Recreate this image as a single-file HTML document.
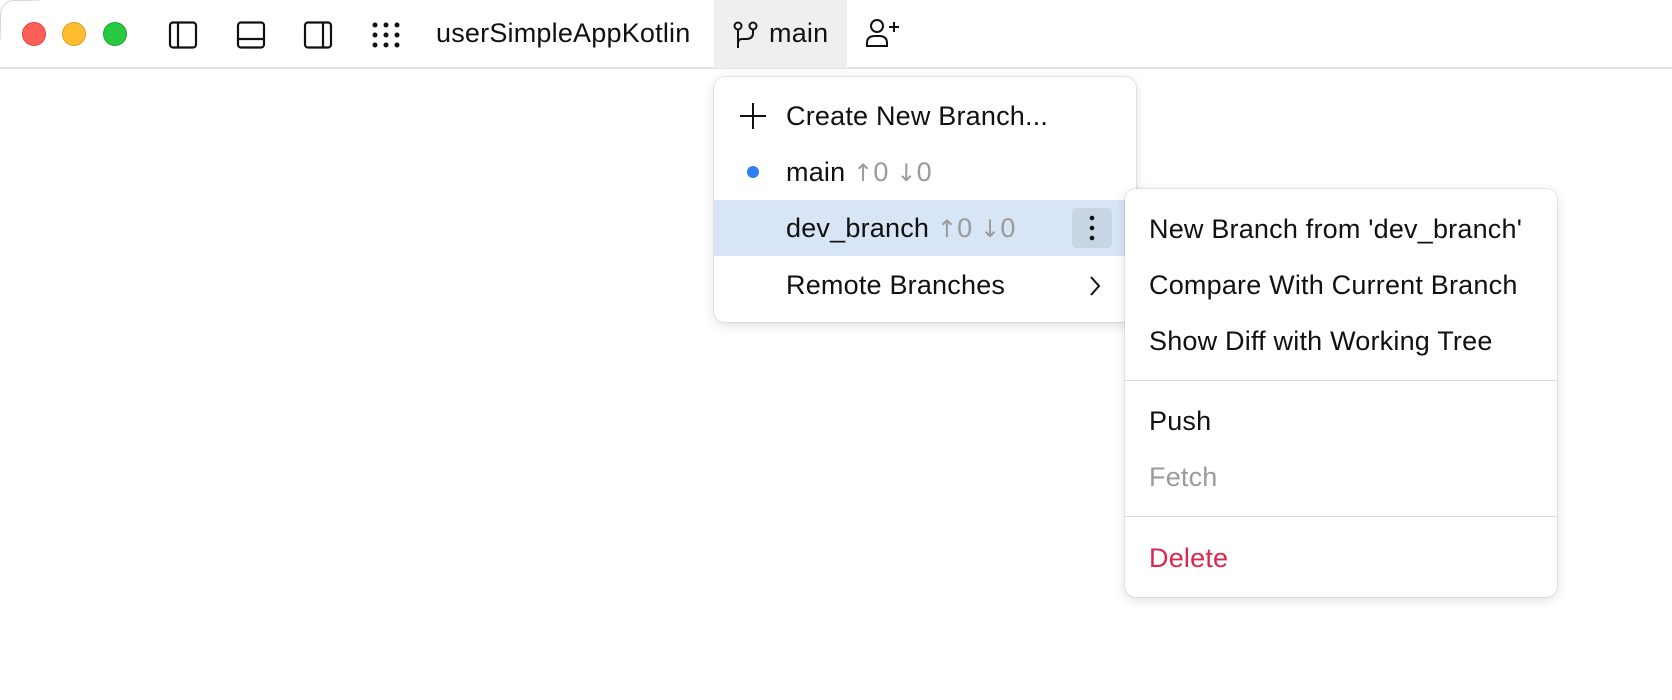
<!DOCTYPE html>
<html><head><meta charset="utf-8">
<style>
*{margin:0;padding:0;box-sizing:border-box}
html,body{width:1672px;height:700px;overflow:hidden;background:#fff;font-family:"Liberation Sans",Arial,sans-serif;color:#111}
.corner{position:absolute;left:0;top:0;width:40px;height:40px;border-left:1px solid #d4d4d4;border-top:1px solid #d4d4d4;border-top-left-radius:14px;-webkit-mask:linear-gradient(135deg,#000 30%,transparent 70%);mask:linear-gradient(135deg,#000 30%,transparent 70%)}
.bar{position:absolute;left:0;top:0;width:1672px;height:69px;border-bottom:2px solid #e4e4e4}
.light{position:absolute;top:22px;width:24px;height:24px;border-radius:50%}
.abs{position:absolute}
.t{position:absolute;font-size:27px;white-space:nowrap;letter-spacing:0.2px}
.menu{position:absolute;background:#fff;border-radius:11px;box-shadow:0 3px 12px rgba(0,0,0,.13),0 0 0 1px rgba(0,0,0,.07)}
.g{color:#9b9b9b}
.ar{font-family:"DejaVu Sans",sans-serif;font-size:24px}
.sep{position:absolute;left:0;right:0;height:1px;background:#dadada}
</style></head><body>
<div class="corner"></div>
<div class="bar"></div>
<div class="light" style="left:22px;background:#fe5f57;border:1px solid #e2463f"></div>
<div class="light" style="left:62px;background:#febc2e;border:1px solid #dea123"></div>
<div class="light" style="left:103px;background:#28c840;border:1px solid #1aab29"></div>

<svg class="abs" style="left:168px;top:21px" width="30" height="28" viewBox="0 0 30 28" fill="none" stroke="#111" stroke-width="2.2"><rect x="2" y="1.5" width="26" height="25" rx="3"/><line x1="10" y1="2" x2="10" y2="26"/></svg>
<svg class="abs" style="left:236px;top:21px" width="30" height="28" viewBox="0 0 30 28" fill="none" stroke="#111" stroke-width="2.2"><rect x="2" y="1.5" width="26" height="25" rx="3"/><line x1="2" y1="18" x2="28" y2="18"/></svg>
<svg class="abs" style="left:303px;top:21px" width="30" height="28" viewBox="0 0 30 28" fill="none" stroke="#111" stroke-width="2.2"><rect x="2" y="1.5" width="26" height="25" rx="3"/><line x1="20" y1="2" x2="20" y2="26"/></svg>
<svg class="abs" style="left:372px;top:22px" width="28" height="26" viewBox="0 0 28 26" fill="#111"><circle cx="3" cy="3" r="2.5"/><circle cx="14" cy="3" r="2.5"/><circle cx="25" cy="3" r="2.5"/><circle cx="3" cy="13" r="2.5"/><circle cx="14" cy="13" r="2.5"/><circle cx="25" cy="13" r="2.5"/><circle cx="3" cy="23" r="2.5"/><circle cx="14" cy="23" r="2.5"/><circle cx="25" cy="23" r="2.5"/></svg>
<div class="t" style="left:436px;top:18px">userSimpleAppKotlin</div>

<div class="abs" style="left:714px;top:0;width:133px;height:68px;background:#efefef"></div>
<svg class="abs" style="left:733px;top:21px" width="26" height="28" viewBox="0 0 26 28" fill="none" stroke="#111" stroke-width="2"><circle cx="5" cy="5" r="3.5"/><circle cx="20" cy="5" r="3.5"/><line x1="5" y1="8.5" x2="5" y2="27"/><path d="M20 8.5 V12 Q20 18 13 18 H9 Q5 18 5 22"/></svg>
<div class="t" style="left:769px;top:18px">main</div>
<svg class="abs" style="left:865px;top:18px" width="36" height="30" viewBox="0 0 36 30" fill="none" stroke="#111" stroke-width="2"><circle cx="12" cy="8" r="6"/><path d="M2 28 V25 Q2 18 10 18 H14 Q22 18 22 25 V28 Z"/><line x1="24" y1="9" x2="34" y2="9"/><line x1="29" y1="4" x2="29" y2="14"/></svg>

<div class="menu" style="left:714px;top:77px;width:422px;height:245px"></div>
<div class="abs" style="left:714px;top:200px;width:412px;height:56px;background:#d7e5f7"></div>
<div class="abs" style="left:1072px;top:208px;width:40px;height:40px;border-radius:4px;background:#c7d5e4"></div>
<svg class="abs" style="left:1088px;top:214px" width="8" height="28" viewBox="0 0 8 28" fill="#111"><circle cx="4" cy="4" r="2.3"/><circle cx="4" cy="14" r="2.3"/><circle cx="4" cy="24" r="2.3"/></svg>
<svg class="abs" style="left:740px;top:103px" width="26" height="26" viewBox="0 0 26 26" stroke="#111" stroke-width="2"><line x1="0" y1="13" x2="26" y2="13"/><line x1="13" y1="0" x2="13" y2="26"/></svg>
<div class="t" style="left:786px;top:101px">Create New Branch...</div>
<div class="abs" style="left:747px;top:166px;width:12px;height:12px;border-radius:50%;background:#2f7ef0"></div>
<div class="t" style="left:786px;top:157px">main <span class="g"><span class="ar">↑</span>0 <span class="ar">↓</span>0</span></div>
<div class="t" style="left:786px;top:213px">dev_branch <span class="g"><span class="ar">↑</span>0 <span class="ar">↓</span>0</span></div>
<div class="t" style="left:786px;top:270px">Remote Branches</div>
<svg class="abs" style="left:1088px;top:275px" width="14" height="22" viewBox="0 0 14 22" fill="none" stroke="#111" stroke-width="2"><path d="M3 2 L11 11 L3 20"/></svg>

<div class="menu" style="left:1125px;top:189px;width:432px;height:408px">
<div class="sep" style="top:191px"></div>
<div class="sep" style="top:327px"></div>
</div>
<div class="t" style="left:1149px;top:214px">New Branch from 'dev_branch'</div>
<div class="t" style="left:1149px;top:270px">Compare With Current Branch</div>
<div class="t" style="left:1149px;top:326px">Show Diff with Working Tree</div>
<div class="t" style="left:1149px;top:406px">Push</div>
<div class="t g" style="left:1149px;top:462px">Fetch</div>
<div class="t" style="left:1149px;top:543px;color:#d8284c">Delete</div>
</body></html>
